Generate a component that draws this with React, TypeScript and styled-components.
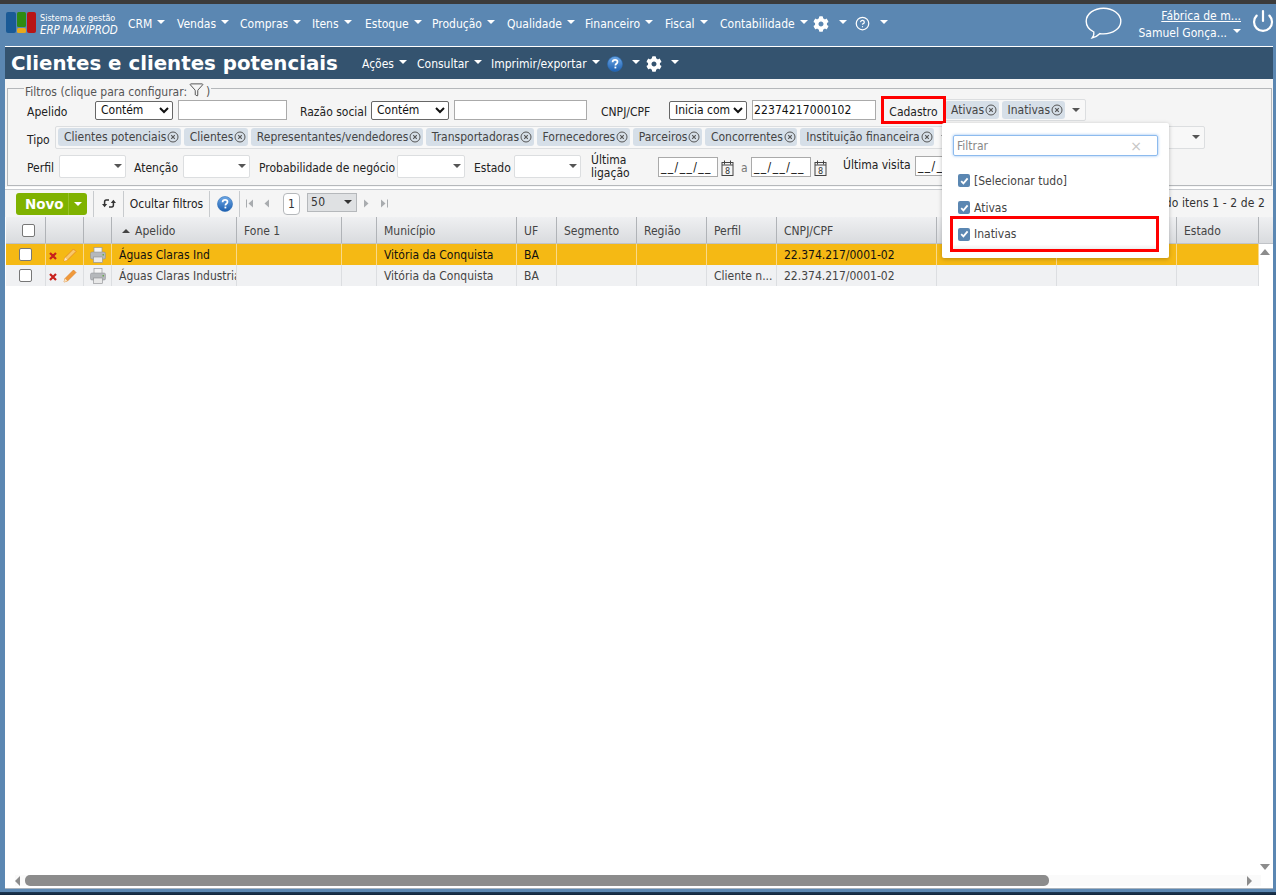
import React from "react";
import styled, { createGlobalStyle } from "styled-components";
import { FaCog } from "react-icons/fa";
import { Power, Filter, CircleHelp } from "lucide-react";

const Global = createGlobalStyle`
  html, body { margin: 0; padding: 0; height: 100%; overflow: hidden; }
  * { box-sizing: border-box; }
  body { font-family: "DejaVu Sans Condensed", "DejaVu Sans", sans-serif; font-size: 12px; color: #333; }
`;

const Page = styled.div`
  width: 1276px; height: 895px; background: #5b87b2; display: flex; flex-direction: column; position: relative;
`;
const TopEdge = styled.div`height: 4px; background: #3b3b3b; flex: none;`;
const Nav = styled.header`
  height: 40px; flex: none; display: flex; align-items: center; color: #fff; padding-left: 6px;
`;
const Logo = styled.div`display: flex; gap: 1px; width: 30px; height: 21px; margin-top: -3px; flex: none;`;
const LogoBar = styled.div<{ $c: string; $w: number }>`
  width: ${p => p.$w}px; border-radius: 2px; background: ${p => p.$c}; flex: none;
`;
const LogoMid = styled.div`width: 9px; display: flex; flex-direction: column; gap: 1px; flex: none;`;
const LogoPart = styled.div<{ $c: string; $g: number }>`
  flex: ${p => p.$g}; border-radius: 1.5px; background: ${p => p.$c};
`;
const Brand = styled.div`margin-left: 4px; width: 88px; flex: none; line-height: 12px; margin-top: -1px;`;
const BrandTop = styled.div`font-size: 9px; white-space: nowrap;`;
const BrandBottom = styled.div`font-size: 11.5px; font-style: italic; white-space: nowrap; letter-spacing: -.1px;`;
const Menu = styled.nav`display: flex; align-items: center; margin-top: -1px;`;
const MenuItem = styled.span<{ $w: number }>`
  width: ${p => p.$w}px; white-space: nowrap; display: inline-flex; align-items: center; flex: none; color: #fff;
`;
const Caret = styled.i<{ $c?: string; $ml?: number; $up?: number }>`
  display: inline-block; width: 0; height: 0; flex: none;
  border-left: 4px solid transparent; border-right: 4px solid transparent;
  border-top: 4px solid ${p => p.$c || "#fff"};
  margin-left: ${p => p.$ml ?? 5}px; position: relative; top: -${p => p.$up ?? 2}px;
`;
const UserArea = styled.div`
  margin-left: auto; display: flex; align-items: center; height: 100%;
`;
const UserText = styled.div`
  width: 104px; margin-left: 15px; display: flex; flex-direction: column; align-items: flex-end; gap: 3px;
`;
const CompanyLink = styled.a`color: #fff; text-decoration: underline; font-size: 12px; white-space: nowrap;`;
const UserName = styled.span`color: #fff; font-size: 12px; white-space: nowrap; display: inline-flex; align-items: center;`;

const Panel = styled.main`
  margin: 2px 3px 0 5px; height: 843px; flex: none; background: #fff; display: flex; flex-direction: column;
  border-bottom: 1px solid #a9b3bd; position: relative;
`;
const BottomEdge = styled.div`
  position: absolute; left: 0; right: 0; bottom: 0; height: 3px; background: linear-gradient(#1f3a56, #11253a);
`;
const TitleBar = styled.div`
  height: 32px; flex: none; margin-top: 1px; background: #34536f; display: flex; align-items: center; color: #fff; padding-left: 6px;
`;
const Title = styled.h1`
  margin: 0; font-family: "DejaVu Sans", sans-serif; font-weight: 700; font-size: 19.8px; color: #fff; width: 351px; white-space: nowrap; flex: none;
`;
const TitleItem = styled.span<{ $w: number }>`width: ${p => p.$w}px; flex: none; display: inline-flex; align-items: center; white-space: nowrap; margin-top: 2px;`;

const Filters = styled.section`
  height: 108px; flex: none; background: #f5f5f5; padding: 7px 1px 0 2px;
`;
const Fieldset = styled.fieldset`
  margin: 0; padding: 0 0 0 19px; height: 100px; border: 1px solid #b5b8bb; position: relative; min-width: 0; display: block;
`;
const Legend = styled.legend`
  padding: 0 1px; margin-left: -3px; color: #555; font-size: 12px; display: flex; align-items: flex-start; gap: 2px; height: 4px; line-height: 12px;
`;
const LegendIcon = styled.span`display: inline-flex; margin-top: -4px;`;
const FilterRow = styled.div<{ $h: number; $mt: number }>`
  display: flex; align-items: center; height: ${p => p.$h}px; margin-top: ${p => p.$mt}px;
`;
const Label = styled.label<{ $w: number; $ml?: number; $pt?: number; $mt?: number; $muted?: boolean }>`
  width: ${p => p.$w}px; flex: none; color: ${p => p.$muted ? "#777" : "#222"}; white-space: nowrap; line-height: 14px;
  margin-left: ${p => p.$ml ?? 0}px; padding-top: ${p => p.$pt ?? 0}px; margin-top: ${p => p.$mt ?? 0}px;
`;
const TwoLineLabel = styled.label`
  width: 67px; margin-left: 10px; flex: none; color: #222; line-height: 13px; padding-top: 1px;
`;
const OpSelect = styled.select<{ $w: number }>`
  width: ${p => p.$w}px; height: 19px; flex: none; font: inherit; font-size: 12px; color: #111; background: #fff; border: 1px solid #666; border-radius: 2px; padding: 0 0 0 1px;
`;
const TextBox = styled.input<{ $w: number }>`
  width: ${p => p.$w}px; height: 20px; flex: none; margin-left: 5px; border: 1px solid #aaa; background: #fff; font: inherit; font-size: 12px; color: #111; padding: 0 1px; letter-spacing: 0.1px; outline: none;
`;
const CadastroBox = styled.div`
  width: 65px; height: 28px; flex: none; border: 3px solid #f00; margin-left: 5px; color: #222; display: flex; align-items: center; justify-content: center; padding-top: 3px; background: #f5f5f5; position: relative; z-index: 1;
`;
const MultiWrap = styled.div`position: relative; margin-left: -4px; flex: none;`;
const MultiBox = styled.div<{ $w: number; $h?: number; $ml?: number }>`
  width: ${p => p.$w}px; height: ${p => p.$h ?? 23}px; background: #f8f8f8; border: 1px solid #dcdee0; border-radius: 2px; display: flex; align-items: center; gap: 3px; padding: 0 0 0 2px; flex: none; margin-left: ${p => p.$ml ?? 0}px; overflow: hidden; white-space: nowrap;
`;
const Chip = styled.span`
  height: 18px; background: #d6dfe8; border-radius: 3px; display: inline-flex; align-items: center; padding: 0 1.5px 0 6px; color: #444; gap: 1px; flex: none;
`;
const ArrowSlot = styled.span<{ $right?: boolean }>`
  display: inline-flex; width: 16px; justify-content: center; flex: none; ${p => p.$right ? "margin-left:auto;" : ""}
`;
const Combo = styled.div<{ $w: number }>`
  width: ${p => p.$w}px; height: 23px; background: #fff; border: 1px solid #dcdee0; border-radius: 2px; display: flex; align-items: center; justify-content: flex-end; padding-right: 3px; flex: none;
`;
const DateBox = styled.div<{ $mt?: number }>`
  width: 60px; height: 20px; border: 1px solid #aaa; background: #fff; color: #111; flex: none; font-size: 12px; display: flex; align-items: center; padding-left: 2px; overflow: hidden; letter-spacing: 1.4px; margin-top: ${p => p.$mt ?? 2}px; white-space: nowrap;
`;
const CalSlot = styled.span`margin: 3px 0 0 3px; display: flex; flex: none;`;
const Popup = styled.div`
  position: absolute; left: 0; top: 24px; width: 227px; height: 135px; background: #fff; z-index: 10; box-shadow: 0 1px 4px rgba(0,0,0,.25); border-radius: 2px; padding: 12px 10px 0 11px; color: #444;
`;
const PopupFilter = styled.div`
  width: 205px; height: 21px; border: 1px solid #8dbbee; box-shadow: 0 0 3px #8fbcf0; border-radius: 2px; display: flex; align-items: center; padding: 0 3px; color: #888; justify-content: space-between;
`;
const ClearX = styled.span`color: #c5c5c5; font-size: 14px; margin-right: 12px; font-family: "DejaVu Sans", sans-serif;`;
const PopupList = styled.ul`list-style: none; margin: 11px 0 0 -3px; padding: 0; display: flex; flex-direction: column;`;
const PopupItem = styled.li<{ $mark?: boolean }>`
  height: ${p => p.$mark ? 36 : 27}px; width: 209px; display: flex; align-items: center; gap: 4px; padding-left: ${p => p.$mark ? 5 : 8}px;
  margin-top: ${p => p.$mark ? -5 : 0}px;
  ${p => p.$mark ? "border: 3px solid #f00; background: linear-gradient(#fff 85%, #eee);" : ""}
`;
const CheckBlue = styled.span`
  width: 12px; height: 13px; border-radius: 2px; background: #5b87b2; display: inline-flex; align-items: center; justify-content: center; flex: none;
`;

const Toolbar = styled.div`
  height: 28px; flex: none; margin-top: 2px; background: #f5f5f5; border-top: 1px solid #c9ccd0; display: flex; align-items: center; padding-left: 11px; position: relative;
`;
const NovoBtn = styled.button`
  width: 71px; height: 22px; margin-top: 1px; border: 0; border-radius: 3px; background: #7fb200; color: #fff; font-family: "DejaVu Sans", sans-serif; font-weight: 700; font-size: 13.5px; display: flex; align-items: center; padding: 0 0 0 9px; flex: none;
`;
const NovoSplit = styled.span`
  margin-left: auto; height: 22px; width: 19px; border-left: 1px solid #96c128; display: flex; align-items: center; justify-content: center;
`;
const Sep = styled.span<{ $ml: number }>`width: 1px; height: 26px; background: #c8cbce; margin-left: ${p => p.$ml}px; flex: none;`;
const ToolText = styled.span<{ $w: number }>`
  width: ${p => p.$w}px; flex: none; color: #222; display: inline-flex; align-items: center; justify-content: center;
`;
const PageNum = styled.span`
  width: 17px; height: 22px; background: #fff; border: 1px solid #b5b8bb; border-radius: 4px; display: flex; align-items: center; justify-content: center; margin-left: 13px; margin-top: 1px; color: #333; flex: none;
`;
const PageSize = styled.div`
  width: 50px; height: 19px; margin-left: 7px; margin-top: -3px; background: #dfe1e3; border: 1px solid #b5b8bb; display: flex; align-items: center; justify-content: space-between; padding: 0 4px 0 3px; flex: none; color: #333; letter-spacing: .4px;
`;
const PagerInfo = styled.span`position: absolute; right: 8px; top: 6px; color: #333; white-space: nowrap; letter-spacing: .1px;`;

const cols = "40px 38px 28px 125px 105px 35px 140px 40px 80px 70px 70px 160px 120px 120px 82px";
const GridArea = styled.div`flex: 1; min-height: 0; position: relative; display: flex; flex-direction: column; padding-left: 1px;`;
const HeadRow = styled.div`
  display: grid; grid-template-columns: ${cols}; height: 27px; flex: none; background: linear-gradient(#eff0f2, #d9dbde); border-bottom: 1px solid #c0c3c7; width: 1267px;
`;
const HeadCell = styled.div`
  border-right: 1px solid #b0b3b7; color: #444; display: flex; align-items: center; padding: 2px 0 0 7px; white-space: nowrap; overflow: hidden;
`;
const HeadCheck = styled.div`
  border-right: 1px solid #b0b3b7; display: flex; align-items: center; padding-left: 16px;
`;
const SortArrow = styled.i`
  width: 0; height: 0; border-left: 4px solid transparent; border-right: 4px solid transparent; border-bottom: 4px solid #444; margin: 0 5px 0 3px; flex: none;
`;
const Row = styled.div<{ $sel?: boolean }>`
  display: grid; grid-template-columns: ${cols}; height: 21px; flex: none; width: 1253px;
  background: ${p => p.$sel ? "#f5b914" : "#f0f1f3"}; color: ${p => p.$sel ? "#111" : "#444"};
`;
const Cell = styled.div<{ $sel?: boolean }>`
  border-right: 1px solid ${p => p.$sel ? "#f9d98a" : "#dcdee1"}; display: flex; align-items: center; padding-left: 7px; white-space: nowrap; overflow: hidden;
`;
const IconCell = styled.div<{ $sel?: boolean }>`
  border-right: 1px solid ${p => p.$sel ? "#f9d98a" : "#dcdee1"}; display: flex; align-items: center; justify-content: center; overflow: hidden;
`;
const ActionCell = styled.div<{ $sel?: boolean }>`
  border-right: 1px solid ${p => p.$sel ? "#f9d98a" : "#dcdee1"}; display: flex; align-items: center; gap: 6px; padding-left: 3px; overflow: hidden;
`;
const Check = styled.span`
  width: 13px; height: 13px; background: #fff; border: 1px solid #777; border-radius: 2px; display: inline-block; flex: none;
`;
const VArrow = styled.i<{ $top?: number; $bottom?: number; $dir: "up" | "down" }>`
  position: absolute; right: 3px; width: 0; height: 0; border-left: 5px solid transparent; border-right: 5px solid transparent;
  ${p => p.$dir === "up" ? "border-bottom: 6px solid #8c8c8c;" : "border-top: 6px solid #8c8c8c;"}
  ${p => p.$top != null ? `top: ${p.$top}px;` : ""} ${p => p.$bottom != null ? `bottom: ${p.$bottom}px;` : ""}
`;
const HScroll = styled.div`
  position: absolute; left: 10px; right: 12px; bottom: 2px; height: 11px; display: flex; align-items: center; background: #fafafa;
`;
const HArrowL = styled.i`
  width: 0; height: 0; border-top: 5px solid transparent; border-bottom: 5px solid transparent; border-right: 5px solid #8c8c8c; flex: none;
`;
const HArrowR = styled.i`
  width: 0; height: 0; border-top: 5px solid transparent; border-bottom: 5px solid transparent; border-left: 5px solid #8c8c8c; flex: none; margin-left: 198px;
`;
const Thumb = styled.div`width: 1024px; height: 11px; border-radius: 5px; background: #8c8c8c; margin-left: 5px; flex: none;`;

const SmallCaret = ({ c = "#555" }: { c?: string }) => <Caret $c={c} $ml={0} $up={0} />;

const Bubble = () => (
  <svg width="37" height="32" viewBox="0 0 37 32" style={{ marginTop: -3, flex: "none" }}>
    <path d="M18.5 1.2C9.2 1.2 1.2 6.8 1.2 14.2c0 4.6 3.1 8.5 7.6 10.8 .4 2.2-.3 4.3-1.5 5.8 3.3-.7 6-2.4 7.7-4.2 1.1.2 2.3.3 3.5.3 9.3 0 17.3-5.4 17.3-12.7S27.8 1.2 18.5 1.2z" fill="none" stroke="#fff" strokeWidth="1.4" />
  </svg>
);
const ChipX = () => (
  <svg width="12" height="12" viewBox="0 0 12 12"><circle cx="6" cy="6" r="5" fill="none" stroke="#555" strokeWidth="1" /><path d="M4.2 4.2l3.6 3.6M7.8 4.2l-3.6 3.6" stroke="#555" strokeWidth="1.1" /></svg>
);
const HelpBlue = () => (
  <svg width="16" height="16" viewBox="0 0 16 16">
    <defs><linearGradient id="hb" x1="0" y1="0" x2="0" y2="1"><stop offset="0" stopColor="#6ea8e6" /><stop offset="1" stopColor="#1c5fb0" /></linearGradient></defs>
    <circle cx="8" cy="8" r="7.5" fill="url(#hb)" stroke="#2a6bb5" strokeWidth=".6" />
    <path d="M5.6 6.2c0-1.5 1.1-2.3 2.5-2.3s2.4.8 2.4 2c0 1.9-2.1 1.8-2.1 3.5" fill="none" stroke="#fff" strokeWidth="1.7" /><rect x="7.5" y="10.6" width="1.8" height="1.8" fill="#fff" />
  </svg>
);
const XRed = () => (
  <svg width="8" height="8" viewBox="0 0 8 8" style={{ flex: "none", marginTop: 2 }}><path d="M1 1l6 6M7 1L1 7" stroke="#c8201c" strokeWidth="2.2" /></svg>
);
const Pencil = ({ sel }: { sel?: boolean }) => (
  <svg width="14" height="14" viewBox="0 0 14 14" style={{ flex: "none" }}>
    <path d="M1 13l1-3.5L10.5 1 13 3.5 4.5 12z" fill={sel ? "#f9c86a" : "#f0993a"} stroke={sel ? "#e07f1c" : "#dd842b"} strokeWidth=".7" />
    <path d="M1 13l1-3.5 2.5 2.5z" fill="#f8e6c8" />
  </svg>
);
const Printer = () => (
  <svg width="16" height="16" viewBox="0 0 16 16">
    <rect x="4" y="0.5" width="8" height="5" fill="#f4f4f4" stroke="#999" strokeWidth=".7" />
    <rect x="0.5" y="5" width="15" height="7" rx="1.5" fill="#b5b8bb" stroke="#8a8d90" strokeWidth=".5" />
    <rect x="3.5" y="10" width="9" height="5.5" fill="#e8e8e8" stroke="#8a8d90" strokeWidth=".6" />
    <rect x="12.5" y="7" width="1.5" height="1.5" fill="#6aa84f" />
  </svg>
);
const Calendar = () => (
  <svg width="13" height="16" viewBox="0 0 13 16"><rect x="1" y="2.5" width="11" height="13" fill="#f5f5f5" stroke="#444" strokeWidth="1" /><path d="M3.5 .5v4M9.5 .5v4M1 5h11" stroke="#444" strokeWidth="1" /><text x="6.5" y="13.5" fontSize="9" textAnchor="middle" fill="#333" fontFamily="DejaVu Sans Condensed, DejaVu Sans, sans-serif">8</text></svg>
);
const Tick = () => (
  <svg width="9" height="8" viewBox="0 0 9 8"><path d="M1.2 4.2l2.2 2.2 4.2-5" fill="none" stroke="#fff" strokeWidth="1.8" /></svg>
);
const Refresh = () => (
  <svg width="14" height="13" viewBox="0 0 14 13">
    <path d="M7 3H4.2C3 3 2.6 4 2.6 5v3" fill="none" stroke="#333" strokeWidth="1.5" />
    <path d="M0 7h5.2l-2.6 3.2z" fill="#333" />
    <path d="M7 10h2.8c1.2 0 1.6-1 1.6-2V5" fill="none" stroke="#333" strokeWidth="1.5" />
    <path d="M8.8 6h5.2l-2.6-3.2z" fill="#333" />
  </svg>
);
const PagerIcon = ({ dir, bar, ml }: { dir: "l" | "r"; bar?: boolean; ml: number }) => (
  <svg width="8" height="9" viewBox="0 0 8 9" style={{ marginLeft: ml, flex: "none" }}>
    {dir === "l" ? <path d="M7 .5v8L2.5 4.5z" fill="#a9acaf" /> : <path d="M1 .5v8l4.5-4z" fill="#a9acaf" />}
    {bar && (dir === "l" ? <rect x="0" y=".5" width="1" height="8" fill="#a9acaf" /> : <rect x="7" y=".5" width="1" height="8" fill="#a9acaf" />)}
  </svg>
);

const tipos = ["Clientes potenciais", "Clientes", "Representantes/vendedores", "Transportadoras", "Fornecedores", "Parceiros", "Concorrentes", "Instituição financeira"];
const menu: [string, number][] = [["CRM", 49], ["Vendas", 63], ["Compras", 72], ["Itens", 53], ["Estoque", 67], ["Produção", 75], ["Qualidade", 78], ["Financeiro", 80], ["Fiscal", 55], ["Contabilidade", 93]];

const rows = [
  { sel: true, ap: "Águas Claras Ind", perfil: "" },
  { sel: false, ap: "Águas Claras Industrial", perfil: "Cliente n..." },
];
const heads = ["Fone 1", "", "Município", "UF", "Segmento", "Região", "Perfil", "CNPJ/CPF", "", "", "Estado"];

export default function App() {
  return (
    <Page>
      <Global />
      <TopEdge />
      <Nav>
        <Logo>
          <LogoBar $c="#1a5a96" $w={10} />
          <LogoMid>
            <LogoPart $c="#2f8a12" $g={3} />
            <LogoPart $c="#e8a81c" $g={1} />
          </LogoMid>
          <LogoBar $c="#b81414" $w={9} />
        </Logo>
        <Brand>
          <BrandTop>Sistema de gestão</BrandTop>
          <BrandBottom>ERP MAXIPROD</BrandBottom>
        </Brand>
        <Menu>
          {menu.map(([t, w]) => (
            <MenuItem key={t} $w={w}>{t}<Caret /></MenuItem>
          ))}
          <MenuItem $w={42}><FaCog size={16} color="#fff" /><Caret $ml={10} /></MenuItem>
          <MenuItem $w={40}><CircleHelp size={15} color="#fff" strokeWidth={2} /><Caret $ml={10} /></MenuItem>
        </Menu>
        <UserArea>
          <Bubble />
          <UserText>
            <CompanyLink>Fábrica de m...</CompanyLink>
            <UserName>Samuel Gonça...<Caret $ml={6} /></UserName>
          </UserText>
          <Power size={24} color="#fff" strokeWidth={2.2} style={{ margin: "-6px 1px 0 10px" }} />
        </UserArea>
      </Nav>
      <Panel>
        <TitleBar>
          <Title>Clientes e clientes potenciais</Title>
          <TitleItem $w={55}>Ações<Caret /></TitleItem>
          <TitleItem $w={74}>Consultar<Caret /></TitleItem>
          <TitleItem $w={116}>Imprimir/exportar<Caret /></TitleItem>
          <TitleItem $w={39}><HelpBlue /><Caret $ml={9} /></TitleItem>
          <TitleItem $w={40}><FaCog size={16} color="#fff" /><Caret $ml={9} /></TitleItem>
        </TitleBar>
        <Filters>
          <Fieldset>
            <Legend>Filtros (clique para configurar: <LegendIcon><Filter size={15} color="#222" strokeWidth={1.2} /></LegendIcon> )</Legend>
            <FilterRow $h={28} $mt={6}>
              <Label $w={68} $pt={4}>Apelido</Label>
              <OpSelect $w={78} defaultValue="Contém"><option>Contém</option></OpSelect>
              <TextBox $w={109} />
              <Label $w={71} $ml={13} $pt={4}>Razão social</Label>
              <OpSelect $w={78} defaultValue="Contém"><option>Contém</option></OpSelect>
              <TextBox $w={133} />
              <Label $w={68} $ml={14} $pt={3}>CNPJ/CPF</Label>
              <OpSelect $w={78} defaultValue="Inicia com"><option>Inicia com</option></OpSelect>
              <TextBox $w={124} defaultValue="22374217000102" />
              <CadastroBox>Cadastro</CadastroBox>
              <MultiWrap>
                <MultiBox $w={144} $h={22}>
                  <Chip>Ativas<ChipX /></Chip>
                  <Chip>Inativas<ChipX /></Chip>
                  <ArrowSlot><SmallCaret /></ArrowSlot>
                </MultiBox>
                <Popup>
                  <PopupFilter>Filtrar<ClearX>×</ClearX></PopupFilter>
                  <PopupList>
                    <PopupItem><CheckBlue><Tick /></CheckBlue>[Selecionar tudo]</PopupItem>
                    <PopupItem><CheckBlue><Tick /></CheckBlue>Ativas</PopupItem>
                    <PopupItem $mark><CheckBlue><Tick /></CheckBlue>Inativas</PopupItem>
                  </PopupList>
                </Popup>
              </MultiWrap>
            </FilterRow>
            <FilterRow $h={24} $mt={1}>
              <Label $w={28} $pt={5}>Tipo</Label>
              <MultiBox $w={896}>
                {tipos.map(t => <Chip key={t}>{t}<ChipX /></Chip>)}
                <ArrowSlot><SmallCaret /></ArrowSlot>
              </MultiBox>
              <MultiBox $w={250} $ml={4}>
                <ArrowSlot $right><SmallCaret /></ArrowSlot>
              </MultiBox>
            </FilterRow>
            <FilterRow $h={26} $mt={4}>
              <Label $w={32} $pt={4}>Perfil</Label>
              <Combo $w={67}><SmallCaret /></Combo>
              <Label $w={49} $ml={8} $pt={4}>Atenção</Label>
              <Combo $w={67}><SmallCaret /></Combo>
              <Label $w={138} $ml={9} $pt={4}>Probabilidade de negócio</Label>
              <Combo $w={68}><SmallCaret /></Combo>
              <Label $w={40} $ml={9} $pt={4}>Estado</Label>
              <Combo $w={67}><SmallCaret /></Combo>
              <TwoLineLabel>Última ligação</TwoLineLabel>
              <DateBox>__/__/__</DateBox>
              <CalSlot><Calendar /></CalSlot>
              <Label $w={13} $ml={7} $mt={3} $muted>a</Label>
              <DateBox style={{ marginLeft: -3 }}>__/__/__</DateBox>
              <CalSlot><Calendar /></CalSlot>
              <Label $w={72} $ml={16} $mt={-2}>Última visita</Label>
              <DateBox $mt={-1}>__/__/__</DateBox>
            </FilterRow>
          </Fieldset>
        </Filters>
        <Toolbar>
          <NovoBtn>Novo<NovoSplit><Caret $ml={0} $up={0} /></NovoSplit></NovoBtn>
          <Sep $ml={6} />
          <ToolText $w={29}><Refresh /></ToolText>
          <Sep $ml={0} />
          <ToolText $w={85}>Ocultar filtros</ToolText>
          <Sep $ml={0} />
          <ToolText $w={29}><HelpBlue /></ToolText>
          <Sep $ml={0} />
          <PagerIcon dir="l" bar ml={6} />
          <PagerIcon dir="l" ml={8} />
          <PageNum>1</PageNum>
          <PageSize>50<SmallCaret c="#333" /></PageSize>
          <PagerIcon dir="r" ml={6} />
          <PagerIcon dir="r" bar ml={9} />
          <PagerInfo>Exibindo itens 1 - 2 de 2</PagerInfo>
        </Toolbar>
        <GridArea>
          <HeadRow>
            <HeadCheck><Check /></HeadCheck>
            <HeadCell />
            <HeadCell />
            <HeadCell><SortArrow />Apelido</HeadCell>
            {heads.map((h, i) => <HeadCell key={i}>{h}</HeadCell>)}
          </HeadRow>
          {rows.map(r => (
            <Row key={r.ap} $sel={r.sel}>
              <IconCell $sel={r.sel}><Check /></IconCell>
              <ActionCell $sel={r.sel}><XRed /><Pencil sel={r.sel} /></ActionCell>
              <IconCell $sel={r.sel}><Printer /></IconCell>
              <Cell $sel={r.sel}>{r.ap}</Cell>
              <Cell $sel={r.sel} />
              <Cell $sel={r.sel} />
              <Cell $sel={r.sel}>Vitória da Conquista</Cell>
              <Cell $sel={r.sel}>BA</Cell>
              <Cell $sel={r.sel} />
              <Cell $sel={r.sel} />
              <Cell $sel={r.sel}>{r.perfil}</Cell>
              <Cell $sel={r.sel}>22.374.217/0001-02</Cell>
              <Cell $sel={r.sel} />
              <Cell $sel={r.sel} />
              <Cell $sel={r.sel} />
            </Row>
          ))}
          <VArrow $dir="up" $top={32} />
          <VArrow $dir="down" $bottom={18} />
          <HScroll>
            <HArrowL />
            <Thumb />
            <HArrowR />
          </HScroll>
        </GridArea>
      </Panel>
      <BottomEdge />
    </Page>
  );
}
